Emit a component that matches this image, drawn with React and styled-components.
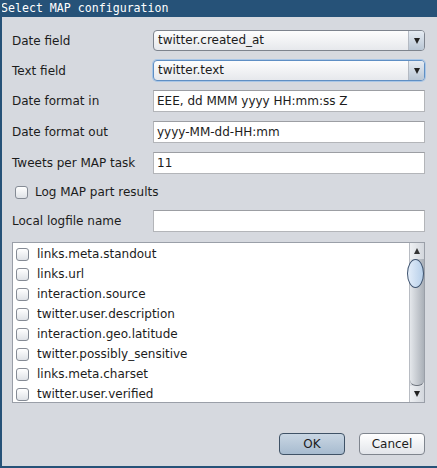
import styled, { createGlobalStyle } from "styled-components";

const GlobalStyle = createGlobalStyle`
    html, body {
        margin: 0;
        padding: 0;
        background: #d6d9df;
    }
    * { box-sizing: border-box; }
`;

const fields = [
    "links.meta.standout",
    "links.url",
    "interaction.source",
    "twitter.user.description",
    "interaction.geo.latitude",
    "twitter.possibly_sensitive",
    "links.meta.charset",
    "twitter.user.verified",
];

export default function App () {
    return (
        <Window>
            <GlobalStyle />
            <TitleBar>Select MAP configuration</TitleBar>
            <Body>
                <Row $h={21}>
                    <Label>Date field</Label>
                    <Combo>
                        <ComboText>twitter.created_at</ComboText>
                        <ComboArrow><Tri /></ComboArrow>
                    </Combo>
                </Row>
                <Row $h={21}>
                    <Label>Text field</Label>
                    <Combo $focused>
                        <ComboText>twitter.text</ComboText>
                        <ComboArrow><Tri /></ComboArrow>
                    </Combo>
                </Row>
                <Row $h={22}>
                    <Label>Date format in</Label>
                    <Field>EEE, dd MMM yyyy HH:mm:ss Z</Field>
                </Row>
                <Row $h={22}>
                    <Label>Date format out</Label>
                    <Field>yyyy-MM-dd-HH:mm</Field>
                </Row>
                <Row $h={22}>
                    <Label>Tweets per MAP task</Label>
                    <Field>11</Field>
                </Row>
                <CheckRow>
                    <Box />
                    <span>Log MAP part results</span>
                </CheckRow>
                <Row $h={22}>
                    <Label>Local logfile name</Label>
                    <Field />
                </Row>
                <List>
                    <Items>
                        {fields.map((f) => (
                            <Item key={f}>
                                <Box />
                                <span>{f}</span>
                            </Item>
                        ))}
                    </Items>
                    <ScrollBar>
                        <ScrollBtn><TriUp /></ScrollBtn>
                        <Track>
                            <Thumb />
                        </Track>
                        <ScrollBtn><Tri /></ScrollBtn>
                    </ScrollBar>
                </List>
                <Buttons>
                    <Button $primary>OK</Button>
                    <Button>Cancel</Button>
                </Buttons>
            </Body>
        </Window>
    );
}

const Window = styled.div`
    width: 437px;
    height: 468px;
    display: flex;
    flex-direction: column;
    background: #d6d9df;
    border-left: 2px solid #265278;
    border-bottom: 2px solid #265278;
    overflow: hidden;
    font-family: "DejaVu Sans", sans-serif;
    font-size: 12px;
    color: #1c1c1c;
`;

const TitleBar = styled.div`
    height: 17px;
    margin-left: -2px;
    padding-left: 1px;
    background: #265278;
    color: #ffffff;
    font-family: "DejaVu Sans Mono", monospace;
    font-size: 11.6px;
    line-height: 17px;
    white-space: nowrap;
`;

const Body = styled.div`
    flex: 1;
    display: flex;
    flex-direction: column;
    gap: 9px;
    padding: 13px 12px 0 10px;
`;

const Row = styled.div`
    display: flex;
    align-items: center;
    height: ${(p) => p.$h}px;
`;

const Label = styled.div`
    width: 141px;
    flex-shrink: 0;
`;

const Combo = styled.div`
    flex: 1;
    height: 100%;
    display: flex;
    border: 1px solid ${(p) => (p.$focused ? "#5f8fc4" : "#7d838d")};
    box-shadow: ${(p) => (p.$focused ? "0 0 0 1px #a9c6e6" : "none")};
    border-radius: 4px;
    background: linear-gradient(#fdfdfd, #e6e8ec);
    overflow: hidden;
`;

const ComboText = styled.div`
    flex: 1;
    padding-left: 4px;
    line-height: 19px;
`;

const ComboArrow = styled.div`
    width: 16px;
    display: flex;
    align-items: center;
    justify-content: center;
    border-left: 1px solid #b4bac3;
    background: linear-gradient(#e6ecf3, #b9c6d4);
`;

const Tri = styled.div`
    width: 0;
    height: 0;
    border-left: 3.5px solid transparent;
    border-right: 3.5px solid transparent;
    border-top: 6px solid #222;
`;

const TriUp = styled(Tri)`
    border-top: none;
    border-bottom: 6px solid #333;
`;

const Field = styled.div`
    flex: 1;
    height: 100%;
    padding-left: 3px;
    line-height: 20px;
    background: #ffffff;
    border: 1px solid #b3b5b9;
    border-top-color: #9c9ea3;
`;

const CheckRow = styled.div`
    display: flex;
    align-items: center;
    gap: 7px;
    height: 18px;
    padding-left: 3px;
`;

const Box = styled.div`
    width: 13px;
    height: 13px;
    flex-shrink: 0;
    border: 1px solid #858b95;
    border-radius: 3px;
    background: linear-gradient(#ffffff, #dfe2e7);
`;

const List = styled.div`
    display: flex;
    height: 161px;
    margin-top: 1px;
    border: 1px solid #9a9fa8;
    background: #ffffff;
`;

const Items = styled.div`
    flex: 1;
    padding-top: 1px;
`;

const Item = styled.div`
    display: flex;
    align-items: center;
    gap: 8px;
    height: 20px;
    padding-left: 3px;
`;

const ScrollBar = styled.div`
    width: 15px;
    display: flex;
    flex-direction: column;
    background: #dcdfe4;
    border-left: 1px solid #b8bcc3;
`;

const ScrollBtn = styled.div`
    height: 16px;
    display: flex;
    align-items: center;
    justify-content: center;
    background: linear-gradient(90deg, #eef0f3, #d3d7dd);
`;

const Track = styled.div`
    flex: 1;
    position: relative;
    background: linear-gradient(90deg, #e4e7eb, #aab0b8);
    border-radius: 0 0 6px 6px;
    border-bottom: 1px solid #6f757e;
`;

const Thumb = styled.div`
    position: absolute;
    top: 0;
    left: -3px;
    width: 17px;
    height: 29px;
    border: 1px solid #3f5470;
    border-radius: 50% / 50%;
    background: linear-gradient(90deg, #e4eefa, #b7cfe9);
`;

const Buttons = styled.div`
    display: flex;
    justify-content: flex-end;
    gap: 14px;
    margin-top: 21px;
`;

const Button = styled.div`
    width: 66px;
    height: 22px;
    display: flex;
    align-items: center;
    justify-content: center;
    border: 1px solid ${(p) => (p.$primary ? "#3f5266" : "#7f858e")};
    border-radius: 4px;
    background: ${(p) =>
        p.$primary
            ? "linear-gradient(#c9d6e3, #a7bbcf)"
            : "linear-gradient(#ffffff, #e2e5ea)"};
`;
